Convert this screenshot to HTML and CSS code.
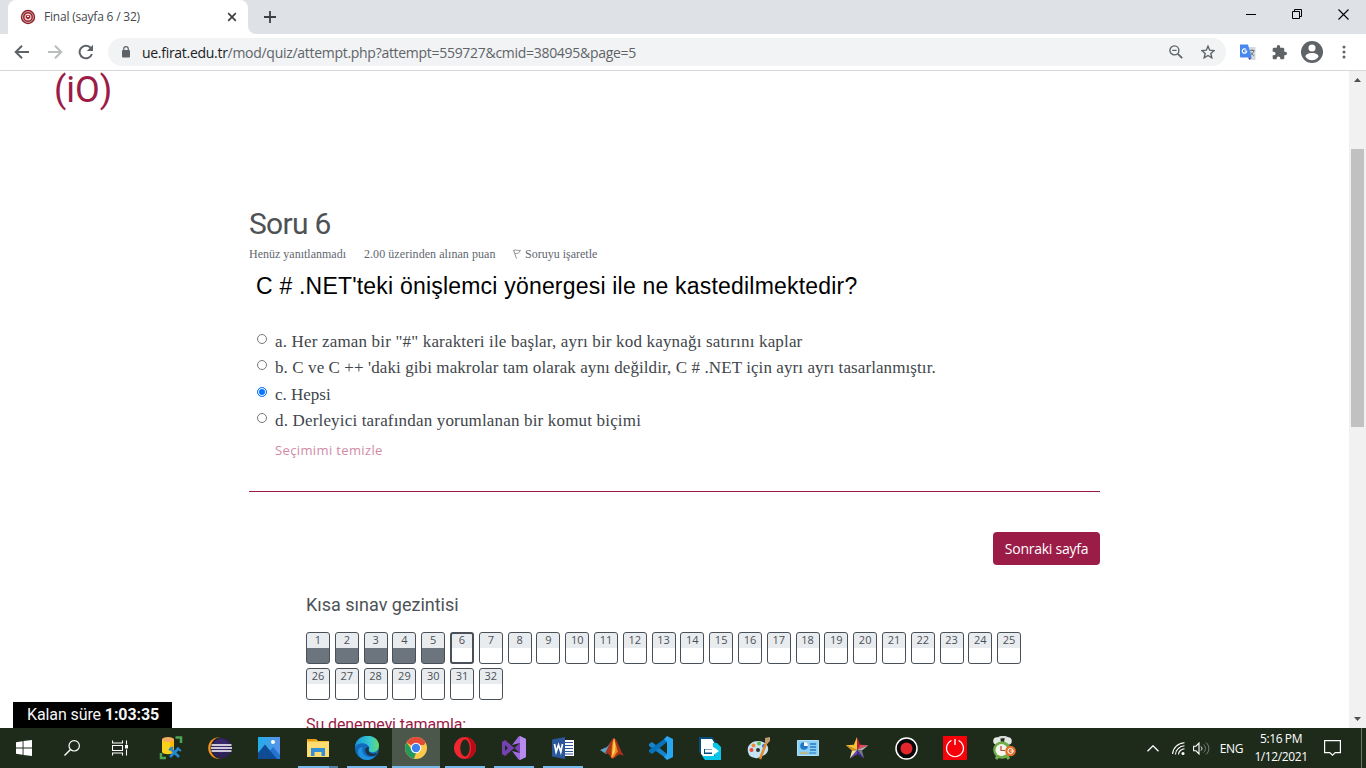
FILE: index.html
```html
<!DOCTYPE html>
<html lang="tr">
<head>
<meta charset="utf-8">
<title>Final (sayfa 6 / 32)</title>
<link rel="stylesheet" href="styles.css">
</head>
<body>
<div class="screen">
  <header class="tabstrip">
    <div class="tab">
      <svg class="favicon" width="16" height="16" viewBox="0 0 16 16"><circle cx="8" cy="8" r="7.200" fill="#8c1f2b"/><circle cx="8" cy="8" r="5.400" fill="none" stroke="#d9a9a5" stroke-width="1"/><circle cx="8" cy="8" r="3.500" fill="#f3dcd8"/><path d="M5.700 6.200h4.600v2.600L8 10.400 5.700 8.800z" fill="#a3242d"/><path d="M7 7.500h2" stroke="#fff"/></svg>
      <span class="tab-title">Final (sayfa 6 / 32)</span>
      <svg class="tab-close" width="10" height="10" viewBox="0 0 10 10"><path d="M1.200 1.200l7.600 7.600M8.800 1.200L1.200 8.800" stroke="#3c4043" stroke-width="1.700"/></svg>
    </div>
    <svg class="tab-curve" width="8" height="8" viewBox="0 0 8 8"><path d="M0 0a8 8 0 0 0 8 8H0z" fill="#fff"/></svg>
    <svg class="new-tab" width="12" height="12" viewBox="0 0 12 12"><path d="M6 0v12M0 6h12" stroke="#3c4043" stroke-width="1.800"/></svg>
    <div class="window-controls">
      <svg width="10" height="10" viewBox="0 0 10 10"><path d="M0 5.500h10" stroke="#000"/></svg>
      <svg width="10" height="10" viewBox="0 0 10 10"><path d="M.5 2.500h7v7h-7zM2.500 2.500v-2h7v7h-2" fill="none" stroke="#000"/></svg>
      <svg width="11" height="11" viewBox="0 0 11 11"><path d="M.5.5l10 10M10.500.5l-10 10" stroke="#000" stroke-width="1.100"/></svg>
    </div>
  </header>
  <div class="toolbar">
    <svg class="back" width="16" height="16" viewBox="0 0 16 16"><path d="M15 8H2M8 1.700L1.700 8 8 14.300" fill="none" stroke="#5f6368" stroke-width="2"/></svg>
    <svg class="forward" width="16" height="16" viewBox="0 0 16 16"><path d="M1 8h13M8 1.700L14.300 8 8 14.300" fill="none" stroke="#babcbe" stroke-width="2"/></svg>
    <svg class="reload" width="16" height="16" viewBox="0 0 16 16"><path d="M13.900 10A6.300 6.300 0 1 1 12.300 3.500L14 5.200" fill="none" stroke="#5f6368" stroke-width="2"/><path d="M15 .8V7H8.800z" fill="#5f6368"/></svg>
    <div class="omnibox">
      <svg class="lock" width="10" height="12" viewBox="0 0 10 12"><rect x="1" y="4" width="8" height="7.500" rx="1" fill="#5f6368"/><path d="M2.700 4.500V3a2.300 2.300 0 0 1 4.600 0v1.500" fill="none" stroke="#5f6368" stroke-width="1.200"/></svg>
      <span class="url"><b>ue.firat.edu.tr</b>/mod/quiz/attempt.php?attempt=559727&amp;cmid=380495&amp;page=5</span>
      <svg class="zoom" width="14" height="14" viewBox="0 0 14 14"><circle cx="5.400" cy="5.400" r="4.500" fill="none" stroke="#5f6368" stroke-width="1.400"/><path d="M3.200 5.400h4.400" stroke="#5f6368" stroke-width="1.200"/><path d="M8.800 8.800l4.400 4.400" stroke="#5f6368" stroke-width="1.700"/></svg>
      <svg class="star" width="14" height="14" viewBox="0 0 14 14"><path d="M7 1.200l1.700 4 4.400.4-3.300 2.900 1 4.300L7 10.500l-3.800 2.300 1-4.300L.9 5.600l4.400-.4z" fill="none" stroke="#5f6368" stroke-width="1.400"/></svg>
    </div>
    <svg class="translate" width="16" height="16" viewBox="0 0 16 16"><path d="M7 3h8.500v13H10z" fill="#d5d8dc"/><path d="M9.500 6.500h5M12 5.200v1.300M14 6.500c-.7 2.500-2 4-4 5M10.500 8c1 1.800 2.200 3 3.700 3.700" fill="none" stroke="#647a80"/><path d="M0 .5h8l3.600 13H1a1 1 0 0 1-1-1z" fill="#4787f0"/><path d="M8 13.500h3.600L9.500 16z" fill="#3b3fb5"/><path d="M6 5.400A2.200 2.200 0 1 0 6.700 7H4.600" fill="none" stroke="#fff" stroke-width="1.200"/></svg>
    <svg class="puzzle" width="15" height="15" viewBox="1 1 22 22"><path fill="#5f6368" d="M20.500 11H19V7c0-1.100-.9-2-2-2h-4V3.500a2.500 2.500 0 0 0-5 0V5H4c-1.100 0-2 .9-2 2v3.800h1.500a2.700 2.700 0 0 1 0 5.400H2V20c0 1.100.9 2 2 2h3.800v-1.500a2.700 2.700 0 0 1 5.400 0V22H17c1.100 0 2-.9 2-2v-4h1.500a2.500 2.500 0 0 0 0-5z"/></svg>
    <svg class="avatar" width="22" height="22" viewBox="0 0 22 22"><circle cx="11" cy="11" r="11" fill="#5f6368"/><circle cx="11" cy="7" r="3.500" fill="#fff"/><path d="M4.500 15.800c0-5 13-5 13 0-1.600 2.400-4 3.500-6.500 3.500s-4.900-1.100-6.500-3.500z" fill="#fff"/></svg>
    <svg class="dots" width="4" height="14" viewBox="0 0 4 14"><g fill="#5f6368"><circle cx="2" cy="2" r="1.500"/><circle cx="2" cy="7" r="1.500"/><circle cx="2" cy="12" r="1.500"/></g></svg>
  </div>
  <div class="viewport">
    <main class="page">
      <div class="brand">(iO)</div>
      <section class="question">
        <h1 class="question-no">Soru 6</h1>
        <div class="info">
          <span class="info-state">Henüz yanıtlanmadı</span>
          <span class="info-grade">2.00 üzerinden alınan puan</span>
          <svg class="flag" width="8" height="10" viewBox="0 0 8 10"><path d="M.5 1l3 8.500M.7 1.300c2.300-1 4 .8 6.800 0L5.400 4.200c-1.200.5-2-.3-3.400.3" fill="none" stroke="#888" stroke-width=".9"/></svg>
          <span class="info-flag">Soruyu işaretle</span>
        </div>
        <div class="question-text">C # .NET'teki önişlemci yönergesi ile ne kastedilmektedir?</div>
        <div class="answers">
          <label class="answer"><span class="radio"></span><span class="answer-a">a. Her zaman bir "#" karakteri ile başlar, ayrı bir kod kaynağı satırını kaplar</span></label>
          <label class="answer"><span class="radio"></span><span class="answer-b">b. C ve C ++ 'daki gibi makrolar tam olarak aynı değildir, C # .NET için ayrı ayrı tasarlanmıştır.</span></label>
          <label class="answer"><span class="radio radio-on"></span><span class="answer-c">c. Hepsi</span></label>
          <label class="answer"><span class="radio"></span><span class="answer-d">d. Derleyici tarafından yorumlanan bir komut biçimi</span></label>
        </div>
        <a class="clear">Seçimimi temizle</a>
        <div class="actions"><div class="next"><span>Sonraki sayfa</span></div></div>
      </section>
      <section class="quiz-nav">
        <h2 class="nav-title">Kısa sınav gezintisi</h2>
        <div class="nav-grid">
          <a class="cell done">1</a><a class="cell done">2</a><a class="cell done">3</a><a class="cell done">4</a><a class="cell done">5</a><a class="cell current">6</a><a class="cell">7</a><a class="cell">8</a><a class="cell">9</a><a class="cell">10</a><a class="cell">11</a><a class="cell">12</a><a class="cell">13</a><a class="cell">14</a><a class="cell">15</a><a class="cell">16</a><a class="cell">17</a><a class="cell">18</a><a class="cell">19</a><a class="cell">20</a><a class="cell">21</a><a class="cell">22</a><a class="cell">23</a><a class="cell">24</a><a class="cell">25</a><a class="cell">26</a><a class="cell">27</a><a class="cell">28</a><a class="cell">29</a><a class="cell">30</a><a class="cell">31</a><a class="cell">32</a>
        </div>
        <a class="finish">Şu denemeyi tamamla:</a>
      </section>
      <div class="timer">Kalan süre <b>1:03:35</b></div>
    </main>
    <div class="scrollbar">
      <svg width="7" height="4" viewBox="0 0 7 4"><path d="M0 4h7L3.500 0z" fill="#505050"/></svg>
      <div class="thumb"></div>
      <svg class="down" width="7" height="4" viewBox="0 0 7 4"><path d="M0 0h7L3.500 4z" fill="#505050"/></svg>
    </div>
  </div>
  <footer class="taskbar">
    <div class="sys"><svg width="16" height="16" viewBox="0 0 16 16"><path d="M0 2.300l6.600-1v6.200H0zM7.500 1.100L16 0v7.500H7.500zM0 8.500h6.600v6.200l-6.600-1zM7.500 8.500H16V16l-8.500-1.100z" fill="#fff"/></svg></div>
    <div class="sys"><svg width="16" height="16" viewBox="0 0 16 16"><circle cx="10.200" cy="5.800" r="5.200" fill="none" stroke="#fff" stroke-width="1.200"/><path d="M6.500 9.500L.5 15.500" stroke="#fff" stroke-width="1.400"/></svg></div>
    <div class="sys"><svg width="17" height="16" viewBox="0 0 17 16"><path d="M.5.500v2.500h10V.5M.5 5.500h10v5H.500zM.5 15.500V13h10v2.500M14.500.5v4M14.500 9.500v6" fill="none" stroke="#fff" stroke-width="1.100"/><path d="M13 5h3v3.500h-3z" fill="#fff"/></svg></div>
    <div class="apps">
      <div class="app"><svg width="24" height="24" viewBox="0 0 24 24"><path d="M16.500 1.500H22V7M2 17v5h5" fill="none" stroke="#4da551" stroke-width="2.500"/><path d="M3 3v13c1 3 11 3 12 0V3z" fill="#f9d21c"/><path d="M11 3v14l4-1V3z" fill="#ffb900"/><ellipse cx="9" cy="3.500" rx="6" ry="2.500" fill="#f4ad62"/><path d="M11 12l9 9M20 12l-9 9" stroke="#2389d7" stroke-width="2.600"/><path d="M10 14l4-3M18 12l4 3" stroke="#2389d7" stroke-width="2"/></svg></div>
      <div class="app"><svg width="24" height="24" viewBox="0 0 24 24"><circle cx="11" cy="12" r="10.800" fill="#f7941e"/><circle cx="13.500" cy="12" r="11" fill="#1e2b1b"/><circle cx="13.500" cy="12" r="10.300" fill="#2c2255"/><circle cx="13" cy="10" r="7" fill="#413078" opacity=".6"/><path d="M3.500 9h20M3 12h21M3.500 15h20" stroke="#fff" stroke-width="1.500"/></svg></div>
      <div class="app"><svg width="22" height="22" viewBox="0 0 22 22"><defs><linearGradient id="sky" x2="1"><stop stop-color="#22aee9"/><stop offset="1" stop-color="#5a91ea"/></linearGradient></defs><path d="M0 0h22v22H0z" fill="url(#sky)"/><path d="M10 16l5-6 7 8v4H8z" fill="#2475d0"/><path d="M0 16L7 7.500 19 22H0z" fill="#0f4c93"/><circle cx="15" cy="5" r="2" fill="#fff"/></svg></div>
      <div class="app stacked"><svg width="22" height="20" viewBox="0 0 22 20"><path d="M0 1h9l2 2h11v16H0z" fill="#f5bd38"/><path d="M0 4h22v15H0z" fill="#ffdc72"/><path d="M0 1h9v2H1z" fill="#e59d13"/><path d="M4 18v-8h14v8h-3.500v-4h-7v4z" fill="#328ed7"/></svg></div>
      <div class="app running"><svg width="24" height="24" viewBox="0 0 24 24"><defs><linearGradient id="wave" x2="1"><stop stop-color="#1598de"/><stop offset=".65" stop-color="#39c9cc"/><stop offset="1" stop-color="#65dc62"/></linearGradient></defs><circle cx="12" cy="12" r="12" fill="#1269bd"/><path d="M0 11C1-3.500 23-3.500 24 9c0 6-4 8-9 7-4-1 0-2-1-5C12 6 3 6 0 11z" fill="url(#wave)"/><path d="M8 11c-3 7 5 13 12 9-4 5-11 5-15 1-4-5-2-10 3-10z" fill="#1c91df"/><path d="M14 11c-6-1-5 9 3 9 3 0 5-2 5-3-4 2-10 0-8-6z" fill="#1c3445"/></svg></div>
      <div class="app active"><svg width="22" height="22" viewBox="0 0 22 22"><circle cx="11" cy="11" r="11" fill="#fdc94b"/><path d="M1.500 5.500A11 11 0 0 1 20.500 5.500L11 11z" fill="#e24b3b"/><path d="M1.500 5.500L8 14l3 2-2 5.800A11 11 0 0 1 1.500 5.500z" fill="#27985c"/><path d="M10 5.500h10.500L19 8H11z" fill="#e24b3b"/><circle cx="11" cy="11" r="5.300" fill="#fff"/><circle cx="11" cy="11" r="4.200" fill="#3b82ec"/></svg></div>
      <div class="app running"><svg width="22" height="22" viewBox="0 0 22 22"><ellipse cx="11" cy="11" rx="11" ry="11" fill="#f02730"/><path d="M11 0a11 11 0 0 1 0 22c8-2 8-20 0-22z" fill="#b80d18"/><ellipse cx="11" cy="11" rx="4.700" ry="8.500" fill="#1e2b1b"/></svg></div>
      <div class="app running"><svg width="24" height="24" viewBox="0 0 24 24"><path d="M0 6l3-2L18 17V7L3 20l-3-2z" fill="#7540b0"/><path d="M3 9v6l3-3z" fill="#1e2b1b"/><path d="M17 0l7 3v18l-7 3-7-9 8 2V7l-8 2z" fill="#9c6be2"/><path d="M18 0l6 3v18l-6 3z" fill="#b98aef"/></svg></div>
      <div class="app running"><svg width="22" height="22" viewBox="0 0 22 22"><path d="M12 3h10v16H12z" fill="#fff"/><path d="M13 5.500h8M13 8.500h8M13 11.500h8M13 14.500h8M13 17h8" stroke="#2b579a"/><path d="M0 2.500L13 0v22L0 19.500z" fill="#2b579a"/><path d="M2.500 7l1.600 8L6.500 8l2.300 7 1.700-8" fill="none" stroke="#fff" stroke-width="1.700"/></svg></div>
      <div class="app"><svg width="24" height="22" viewBox="0 0 24 22"><path d="M0 13l7-3 4-5 2 5-7 7z" fill="#5fa4cb"/><path d="M5 16c3-5 6-14 9-15 3 1 5 10 10 18-4-2-5-2-7 0-2 1-3 4-6 2-1-3-3-5-6-5z" fill="#a93419"/><path d="M14 1c-2 4-3 12-2 20 3 0 4-6 6-6z" fill="#f18424"/><path d="M14 1c1 5 2 7 1 14-2 3-3 5-4 6 2-6 2-12 3-20z" fill="#ffd24b"/></svg></div>
      <div class="app"><svg width="24" height="24" viewBox="0 0 24 24"><path d="M0 8l3-2 15 12v5L0 10z" fill="#1684cd"/><path d="M0 16l3 2L18 6V1L0 14z" fill="#0873bb"/><path d="M18 0l6 3v18l-6 3-3-3 3-3V6l-3-3z" fill="#28a7f1"/></svg></div>
      <div class="app"><svg width="22" height="23" viewBox="0 0 22 23"><path d="M0 0h13l4 5v14H4l-4-4z" fill="#074c79"/><path d="M2 2h11l3 5v5H5v5h10v3H5l-3-3z" fill="#fff"/><path d="M14 6h4l4 4v13H6l-3-4h13l-2-3z" fill="#08c7e8"/><path d="M6 12.500h7V9l7 5-7 5v-3.500H6z" fill="#fff"/></svg></div>
      <div class="app"><svg width="24" height="24" viewBox="0 0 24 24"><path d="M1 16C-1 8 8 3 16 6c8 3 6 13-1 14-4 1-3 3-7 2-4-1-6-2-7-6z" fill="#c5e3f3"/><circle cx="4.500" cy="14" r="2" fill="#f04932"/><circle cx="6.500" cy="9.500" r="2" fill="#ef8b36"/><circle cx="12" cy="7.500" r="2" fill="#57bf48"/><circle cx="17" cy="10" r="2" fill="#386ed2"/><circle cx="11" cy="14" r="2" fill="#24382b"/><path d="M20 5l-7 18" stroke="#e48a2d" stroke-width="2.500"/><path d="M18 2l5-1v4l-3 3-2-2z" fill="#c39b71"/></svg></div>
      <div class="app"><svg width="22" height="18" viewBox="0 0 22 18"><path d="M.5 1.500h21v15H.5z" fill="#8bcdf3" stroke="#b5e1f7"/><circle cx="7" cy="7" r="3.800" fill="#2277c8"/><path d="M7 7V3a4 4 0 0 1 4 4z" fill="#fff"/><path d="M13 5h6M13 8h6M13 11h6" stroke="#287bc3" stroke-width="1.500"/><path d="M3 14h8" stroke="#e8a629"/><path d="M12 14h7" stroke="#287bc3"/></svg></div>
      <div class="app"><svg width="24" height="24" viewBox="0 0 24 24"><path d="M12 1v13L.6 9.300l8.200-.5z" fill="#f3c331"/><path d="M12 1l3.200 7.800L12 14z" fill="#b91f3d"/><path d="M15.200 8.800l8.200.5L12 14z" fill="#df4c5d"/><path d="M23.400 9.300L17 14.600l-5-.6z" fill="#b5b5bd"/><path d="M12 14l5 .6 2.100 8z" fill="#77758c"/><path d="M12 14l7.100 8.600-7.100-4.400z" fill="#3e2a90"/><path d="M12 14v4.200l-7.100 4.400z" fill="#6a43c0"/><path d="M12 14l-7.100 8.600 2.100-8z" fill="#f5e0a0"/><path d="M12 14l-5 .6L.6 9.300z" fill="#dd9b20"/></svg></div>
      <div class="app"><svg width="23" height="23" viewBox="0 0 23 23"><circle cx="11.500" cy="11.500" r="10.500" fill="#080808" stroke="#fff" stroke-width="1.500"/><circle cx="11.500" cy="11.500" r="6" fill="#e3252c"/></svg></div>
      <div class="app"><svg width="24" height="24" viewBox="0 0 24 24"><path d="M0 0h24v24H0z" fill="#f80009"/><path d="M8.500 4.500a8.500 8.500 0 1 0 7 0" fill="none" stroke="#fff" stroke-width="1.200"/><path d="M12 3v6" stroke="#fff" stroke-width="1.400"/></svg></div>
      <div class="app"><svg width="24" height="24" viewBox="0 0 24 24"><path d="M4 7C6-1 16-1 18 7" fill="none" stroke="#d5d9d5" stroke-width="2.500"/><circle cx="5" cy="5" r="3.800" fill="#e4e8e4"/><circle cx="16" cy="5" r="3.800" fill="#e4e8e4"/><path d="M4 23l3-4M17 23l-3-4" stroke="#77ab50" stroke-width="3"/><circle cx="10" cy="14" r="8.800" fill="#70ac48"/><circle cx="9.500" cy="14" r="6" fill="#f4f5ed"/><path d="M9 10v4.500h4" fill="none" stroke="#b34a35" stroke-width="1.200"/><circle cx="18.500" cy="15" r="5.300" fill="#e56e2b"/><circle cx="18.500" cy="15" r="2.600" fill="none" stroke="#fff"/><path d="M18.500 15h3" stroke="#fff"/></svg></div>
    </div>
    <div class="tray">
      <svg width="12" height="7" viewBox="0 0 12 7"><path d="M.5 6.300L6 .8l5.500 5.500" fill="none" stroke="#fff" stroke-width="1.300"/></svg>
      <svg class="wifi" width="13" height="13" viewBox="0 0 13 13"><g fill="none" stroke="#fff" stroke-width="1.100"><path d="M.6 12C1 6 6 1 12.500.8"/><path d="M3.500 12.500c0-4.500 4-8.500 9-8.700"/><path d="M6.500 12.500c0-3 3-5.700 6-5.700"/></g><circle cx="11" cy="11.500" r="1.500" fill="#fff"/></svg>
      <svg class="volume" width="17" height="13" viewBox="0 0 17 13"><path d="M.6 4.200H3L6 1v11L3 8.800H.6z" fill="none" stroke="#fff" stroke-width="1.100"/><path d="M8 4.500c1.200 1 1.200 3 0 4" fill="none" stroke="#fff"/><path d="M10.500 2.500c2.500 2 2.500 6 0 8M13 .5c3.800 3 3.800 9 0 12" fill="none" stroke="#7b857a"/></svg>
      <span class="lang">ENG</span>
      <div class="clock"><span class="time">5:16 PM</span><span class="date">1/12/2021</span></div>
      <svg class="notice" width="17" height="16" viewBox="0 0 17 16"><path d="M.6.6h15.800v12h-5.200L8.500 15.200 5.800 12.600H.6z" fill="none" stroke="#fff" stroke-width="1.200"/></svg>
      <div class="peek"></div>
    </div>
  </footer>
</div>
</body>
</html>
```

FILE: styles.css
```css
* { box-sizing: border-box; }
body { margin: 0; }
h1, h2 { margin: 0; font-weight: 400; }
b { font-weight: inherit; }
svg { display: block; flex: none; }

.screen { width: 1366px; height: 768px; display: flex; flex-direction: column; overflow: hidden; background: #fff; font-family: "Open Sans", "Noto Sans", sans-serif; white-space: nowrap; }

/* Browser chrome */
.tabstrip { height: 34px; flex: none; display: flex; background: #dee1e6; padding-left: 8px; }
.tab { width: 240px; height: 34px; background: #fff; border-radius: 8px 8px 0 0; display: flex; align-items: center; padding-left: 12px; }
.tab-title { margin-left: 8px; width: 183px; font-size: 12px; letter-spacing: -.2px; color: #45494d; line-height: 34px; }
.tab-curve { align-self: flex-end; }
.new-tab { margin: 11px 0 0 8px; }
.window-controls { margin: 9px 17px 0 auto; display: flex; gap: 36px; }

.toolbar { height: 37px; flex: none; display: flex; align-items: center; border-bottom: 1px solid #d5d7da; padding-left: 14px; background: #fff; }
.forward { margin-left: 17px; }
.reload { margin-left: 15px; }
.omnibox { width: 1118px; height: 28px; margin-left: 14px; border-radius: 14px; background: #f1f3f4; display: flex; align-items: center; padding: 0 11px 0 13px; }
.url { margin-left: 11px; font-size: 14px; letter-spacing: -.29px; color: #606469; }
.url b { color: #202124; }
.zoom { margin-left: auto; }
.star { margin-left: 18px; }
.translate { margin-left: 14px; }
.puzzle { margin-left: 16px; }
.avatar { margin-left: 14px; }
.dots { margin-left: 19px; }

/* Page */
.viewport { height: 657px; flex: none; display: flex; }
.page { position: relative; width: 1349px; height: 657px; overflow: hidden; }
.brand { height: 135px; padding-left: 54px; font: 300 36px/38px Roboto, sans-serif; font-weight: 400; color: #9b1c47; }
.question { margin: 0 249px; width: 851px; height: 388px; }
.question-no { height: 37px; font: 30px/36px Roboto, sans-serif; letter-spacing: -.7px; color: #4e5256; }
.info { height: 22px; display: flex; align-items: center; font: 12px/22px "Liberation Serif", serif; color: #5f676f; }
.info-state { width: 115px; }
.info-grade { width: 149px; letter-spacing: .06px; }
.info-flag { margin-left: 4px; }
.question-text { height: 64px; padding-left: 7px; font: 23px/42px "Liberation Sans", sans-serif; letter-spacing: .2px; color: #000; }
.answers { padding-left: 8px; font-family: "Liberation Serif", serif; font-size: 17px; color: #41464b; }
.answer { height: 26.4px; display: flex; line-height: 26px; }
.answer-a, .answer-d { letter-spacing: .17px; }
.answer-b { letter-spacing: .09px; }
.radio { width: 10px; height: 10px; margin: 5px 8px 0 0; border: 1px solid #777; border-radius: 50%; background: #fff; flex: none; }
.radio-on { border-color: #1677f2; background: #0b74ff; box-shadow: inset 0 0 0 1px #fff; }
.clear { display: block; height: 57px; padding-left: 26px; border-bottom: 1px solid #9b1c47; font-size: 13px; line-height: 31px; letter-spacing: .37px; color: #d08ba5; }
.actions { display: flex; justify-content: flex-end; padding-top: 40px; }
.next { width: 107px; height: 33px; border-radius: 4px; background: #9b1c47; color: #fff; font-size: 14px; line-height: 34px; letter-spacing: -.25px; text-align: center; }
.quiz-nav { padding: 0 306px; }
.nav-title { height: 38px; font: 18px/22px Roboto, sans-serif; color: #4e5256; }
.nav-grid { width: 724px; display: flex; flex-wrap: wrap; gap: 4px 4.8px; }
.cell { width: 24px; height: 32px; border: 1px solid #495057; border-radius: 3px; background: linear-gradient(#e9ecef 15px, #fff 15px); color: #495057; font-size: 11px; line-height: 14px; text-align: center; }
.done { background: linear-gradient(#e9ecef 15px, #6c757d 15px); }
.current { border-width: 2px; line-height: 12px; background: linear-gradient(#e9ecef 14px, #fff 14px); }
.finish { display: block; margin-top: 13px; font: 16px/24px Roboto, sans-serif; letter-spacing: -.1px; color: #9b1c47; }
.timer { position: absolute; left: 13px; bottom: 0; width: 159px; height: 26px; padding-left: 14px; background: #000; color: #f5f5f5; font: 16px/26px Roboto, sans-serif; letter-spacing: -.1px; }
.timer b { font-weight: 700; }
.scrollbar { width: 17px; background: #f1f1f1; display: flex; flex-direction: column; align-items: center; padding: 7px 0; }
.thumb { width: 13px; height: 278px; margin-top: 67px; background: #c1c1c1; }
.down { margin-top: auto; }

/* Taskbar */
.taskbar { height: 40px; flex: none; display: flex; background: #1e2b1b; color: #fff; }
.sys { width: 48px; display: flex; align-items: center; justify-content: center; }
.apps { display: flex; gap: 1px; padding-left: 3px; }
.app { width: 48px; height: 40px; display: flex; align-items: center; justify-content: center; }
.running { background: linear-gradient(#76b9ed, #76b9ed) center bottom / 40px 2px no-repeat; }
.stacked { background: linear-gradient(90deg, #76b9ed 31px, #527fa3 31px) center bottom / 40px 2px no-repeat; }
.active { background: linear-gradient(#76b9ed, #76b9ed) bottom / 100% 2px no-repeat, #4b574a; }
.tray { margin-left: auto; display: flex; align-items: center; font-size: 12px; letter-spacing: -.4px; }
.wifi { margin-left: 13px; }
.volume { margin-left: 8px; }
.lang { margin-left: 10px; }
.clock { width: 76px; display: flex; flex-direction: column; align-items: center; line-height: 18px; }
.notice { margin-left: 5px; }
.peek { width: 1px; height: 40px; margin: 0 4px 0 20px; background: #6a7568; }
```
